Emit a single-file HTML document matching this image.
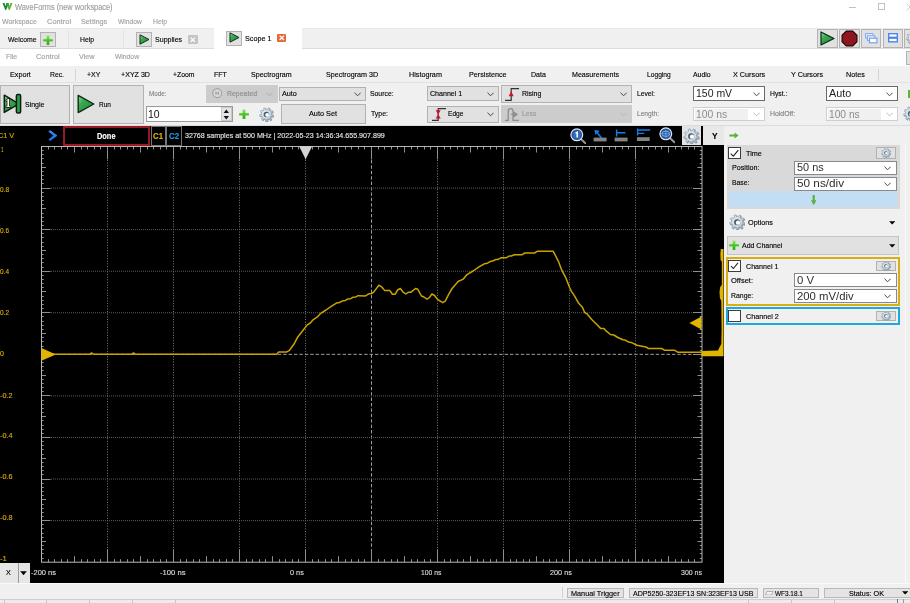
<!DOCTYPE html><html><head><meta charset="utf-8"><title>WaveForms</title><style>

html,body{margin:0;padding:0;}
body{width:910px;height:603px;position:relative;overflow:hidden;background:#f0f0f0;font-family:"Liberation Sans", sans-serif;}
#root{position:absolute;left:0;top:0;width:910px;height:603px;overflow:hidden;will-change:transform;}
.a{position:absolute;}
.t{position:absolute;white-space:pre;line-height:1;transform-origin:0 50%;-webkit-text-stroke:0.14px;}

</style></head><body><div id="root">
<div class="a" style="left:0.00px;top:0.00px;width:910.00px;height:27.50px;background:#fff;"></div>
<svg class="a" style="left:1.60px;top:2.90px" width="11" height="7.4" viewBox="0 0 11 7.4"><path d="M1.1 -1 L3.7 5.6 L6.3 -1" fill="none" stroke="#178a3c" stroke-width="1.9" stroke-linejoin="miter"/><path d="M4.7 -1 L7.3 5.6 L9.9 -1" fill="none" stroke="#5fb52e" stroke-width="1.9" stroke-linejoin="miter"/><path d="M4.7 -1 L6.2 2.9" fill="none" stroke="#2e9a3a" stroke-width="1.7"/></svg>
<span class="t" style="left:15.20px;top:4.20px;font-size:8.2px;color:#9c9c9c;transform:scaleX(0.9038);">WaveForms (new workspace)</span>
<div class="a" style="left:849.00px;top:6.50px;width:6.70px;height:0.70px;background:#c2c2c2;"></div>
<div class="a" style="left:878.30px;top:3.40px;width:6.30px;height:6.20px;border:0.8px solid #c2c2c2;box-sizing:border-box;"></div>
<svg class="a" style="left:906.40px;top:2.60px" width="8" height="9" viewBox="0 0 8 9"><path d="M0.5 0.5 L7.5 7.5 M0.5 7.5 L7.5 0.5" stroke="#c2c2c2" stroke-width="0.8" fill="none"/></svg>
<span class="t" style="left:1.70px;top:18.40px;font-size:8px;color:#a0a0a0;transform:scaleX(0.8727);">Workspace</span>
<span class="t" style="left:46.90px;top:18.40px;font-size:8px;color:#a0a0a0;transform:scaleX(0.9342);">Control</span>
<span class="t" style="left:80.80px;top:18.40px;font-size:8px;color:#a0a0a0;transform:scaleX(0.9064);">Settings</span>
<span class="t" style="left:118.00px;top:18.40px;font-size:8px;color:#a0a0a0;transform:scaleX(0.8365);">Window</span>
<span class="t" style="left:153.00px;top:18.40px;font-size:8px;color:#a0a0a0;transform:scaleX(0.8509);">Help</span>
<div class="a" style="left:0.00px;top:27.50px;width:910.00px;height:21.20px;background:#f0f0f0;"></div>
<div class="a" style="left:0.00px;top:48.20px;width:910.00px;height:0.70px;background:#dcdcdc;"></div>
<div class="a" style="left:0.00px;top:27.50px;width:910.00px;height:0.60px;background:#e9e9e9;"></div>
<span class="t" style="left:8.00px;top:36.00px;font-size:8px;color:#000;transform:scaleX(0.8584);">Welcome</span>
<div class="a" style="left:39.50px;top:32.30px;width:16.20px;height:14.40px;background:#e1e1e1;border:1px solid #b2b2b2;box-sizing:border-box;"></div>
<svg class="a" style="left:42.60px;top:34.50px" width="10" height="10" viewBox="0 0 10 10"><defs><linearGradient id="pg" x1="0" y1="0" x2="0" y2="1"><stop offset="0" stop-color="#96e474"/><stop offset="0.5" stop-color="#48c424"/><stop offset="1" stop-color="#2f9e14"/></linearGradient></defs><path d="M4 0.5 h2 a0.5 0.5 0 0 1 0.5 0.5 v3 h3 a0.5 0.5 0 0 1 0.5 0.5 v1.6 a0.5 0.5 0 0 1 -0.5 0.5 h-3 v3 a0.5 0.5 0 0 1 -0.5 0.5 h-2 a0.5 0.5 0 0 1 -0.5 -0.5 v-3 h-3 a0.5 0.5 0 0 1 -0.5 -0.5 v-1.6 a0.5 0.5 0 0 1 0.5 -0.5 h3 v-3 a0.5 0.5 0 0 1 0.5 -0.5 z" fill="url(#pg)" stroke="#c4eeb2" stroke-width="0.4"/></svg>
<div class="a" style="left:68.00px;top:30.00px;width:0.80px;height:17.00px;background:#e3e3e3;"></div>
<span class="t" style="left:79.90px;top:36.00px;font-size:8px;color:#000;transform:scaleX(0.8570);">Help</span>
<div class="a" style="left:123.00px;top:30.00px;width:0.80px;height:17.00px;background:#e3e3e3;"></div>
<div class="a" style="left:136.00px;top:32.00px;width:15.70px;height:14.70px;background:#e1e1e1;border:1px solid #b2b2b2;box-sizing:border-box;"></div>
<svg class="a" style="left:138.60px;top:33.80px" width="11" height="11" viewBox="0 0 13.5 14"><path d="M1 1 L1 13 L12.5 7 Z" fill="url(#tg)" stroke="#0b2a10" stroke-width="1.2" stroke-linejoin="round"/></svg>
<span class="t" style="left:154.90px;top:36.00px;font-size:8px;color:#000;transform:scaleX(0.8831);">Supplies</span>
<div class="a" style="left:188.40px;top:35.10px;width:9.20px;height:8.50px;background:#c4c4c4;border-radius:1px;"></div>
<svg class="a" style="left:190.20px;top:36.60px" width="5.6" height="5.6" viewBox="0 0 5.6 5.6"><path d="M0.6 0.6 L5 5 M0.6 5 L5 0.6" stroke="#fff" stroke-width="1.3"/></svg>
<div class="a" style="left:213.50px;top:27.50px;width:88.90px;height:22.00px;background:#fff;"></div>
<div class="a" style="left:226.30px;top:30.60px;width:15.70px;height:15.10px;background:#e1e1e1;border:1px solid #b2b2b2;box-sizing:border-box;"></div>
<svg class="a" style="left:229.00px;top:32.40px" width="11" height="11" viewBox="0 0 13.5 14"><path d="M1 1 L1 13 L12.5 7 Z" fill="url(#tg)" stroke="#0b2a10" stroke-width="1.2" stroke-linejoin="round"/></svg>
<span class="t" style="left:244.80px;top:35.00px;font-size:8px;color:#000;transform:scaleX(0.8992);">Scope 1</span>
<div class="a" style="left:277.30px;top:33.60px;width:9.10px;height:8.80px;background:#e8673a;border-radius:1px;"></div>
<svg class="a" style="left:279.10px;top:35.20px" width="5.6" height="5.6" viewBox="0 0 5.6 5.6"><path d="M0.6 0.6 L5 5 M0.6 5 L5 0.6" stroke="#fff" stroke-width="1.3"/></svg>
<div class="a" style="left:817.20px;top:29.00px;width:20.40px;height:18.60px;background:#e1e1e1;border:1px solid #b2b2b2;box-sizing:border-box;"></div>
<svg class="a" style="left:820.30px;top:30.80px" width="15" height="15" viewBox="0 0 15 15"><path d="M1 1 L1 14 L14 7.5 Z" fill="url(#tg)" stroke="#0b2a10" stroke-width="1.2" stroke-linejoin="round"/></svg>
<div class="a" style="left:839.20px;top:29.00px;width:20.40px;height:18.60px;background:#e1e1e1;border:1px solid #b2b2b2;box-sizing:border-box;"></div>
<svg class="a" style="left:840.90px;top:29.80px" width="17" height="17" viewBox="0 0 16 16"><path d="M5 1 L11 1 L15 5 L15 11 L11 15 L5 15 L1 11 L1 5 Z" fill="#8e1620" stroke="#2a0507" stroke-width="1.1"/></svg>
<div class="a" style="left:861.20px;top:29.00px;width:20.10px;height:18.60px;background:#e1e1e1;border:1px solid #b2b2b2;box-sizing:border-box;"></div>
<svg class="a" style="left:865.00px;top:32.50px" width="13" height="11" viewBox="0 0 13 11"><rect x="0.5" y="0.5" width="7.4" height="4.6" fill="#dfe9fb" stroke="#86adf0" stroke-width="1"/><rect x="2.5" y="2.8" width="7.4" height="4.6" fill="#eef3fd" stroke="#7ba5ee" stroke-width="1"/><rect x="4.5" y="5.2" width="7.4" height="4.6" fill="#fff" stroke="#6b9aec" stroke-width="1.1"/></svg>
<div class="a" style="left:882.70px;top:29.00px;width:20.00px;height:18.60px;background:#e1e1e1;border:1px solid #b2b2b2;box-sizing:border-box;"></div>
<svg class="a" style="left:887.50px;top:33.00px" width="11" height="11" viewBox="0 0 11 11"><rect x="0.7" y="0.7" width="8.6" height="3.6" fill="#fff" stroke="#4f86ea" stroke-width="1.4"/><rect x="0.7" y="5.2" width="8.6" height="3.6" fill="#fff" stroke="#4f86ea" stroke-width="1.4"/></svg>
<div class="a" style="left:904.20px;top:29.00px;width:10.80px;height:18.60px;background:#e1e1e1;border:1px solid #b2b2b2;box-sizing:border-box;"></div>
<svg class="a" style="left:905.60px;top:31.40px" width="14" height="14" viewBox="0 0 16 16"><defs><linearGradient id="gg" x1="0" y1="0" x2="1" y2="1"><stop offset="0" stop-color="#eef2f5"/><stop offset="0.5" stop-color="#c6d0d8"/><stop offset="1" stop-color="#94a6b4"/></linearGradient></defs><g transform="translate(8,8)"><path d="M5.30 0.01 L7.28 0.60 L6.94 2.28 L4.89 2.05 L4.05 3.42 L5.19 5.14 L3.85 6.20 L2.42 4.71 L0.91 5.22 L0.67 7.27 L-1.04 7.23 L-1.17 5.17 L-2.66 4.58 L-4.16 6.00 L-5.44 4.87 L-4.22 3.20 L-4.98 1.80 L-7.04 1.92 L-7.30 0.23 L-5.29 -0.26 L-4.98 -1.82 L-6.63 -3.05 L-5.74 -4.51 L-3.89 -3.60 L-2.64 -4.60 L-3.12 -6.60 L-1.50 -7.15 L-0.66 -5.26 L0.93 -5.22 L1.86 -7.06 L3.45 -6.43 L2.87 -4.46 L4.07 -3.40 L5.96 -4.21 L6.78 -2.71 L5.06 -1.57Z" transform="translate(0.6,0.6)" fill="#8498a8" stroke="#8498a8" stroke-width="0.8" stroke-linejoin="round"/><path d="M5.30 0.01 L7.28 0.60 L6.94 2.28 L4.89 2.05 L4.05 3.42 L5.19 5.14 L3.85 6.20 L2.42 4.71 L0.91 5.22 L0.67 7.27 L-1.04 7.23 L-1.17 5.17 L-2.66 4.58 L-4.16 6.00 L-5.44 4.87 L-4.22 3.20 L-4.98 1.80 L-7.04 1.92 L-7.30 0.23 L-5.29 -0.26 L-4.98 -1.82 L-6.63 -3.05 L-5.74 -4.51 L-3.89 -3.60 L-2.64 -4.60 L-3.12 -6.60 L-1.50 -7.15 L-0.66 -5.26 L0.93 -5.22 L1.86 -7.06 L3.45 -6.43 L2.87 -4.46 L4.07 -3.40 L5.96 -4.21 L6.78 -2.71 L5.06 -1.57Z" fill="url(#gg)" stroke="#8ea0ae" stroke-width="0.7" stroke-linejoin="round"/><circle r="4.1" fill="none" stroke="#f4f7f9" stroke-width="0.7" opacity="0.7"/><circle cx="-0.2" cy="-0.1" r="2.8" fill="#465c6d"/><circle cx="0.7" cy="0.4" r="2.1" fill="#fdfdfe"/></g></svg>
<div class="a" style="left:907.20px;top:52.50px;width:3.80px;height:10.00px;background:#8fb2ee;"></div>
<div class="a" style="left:0.00px;top:49.00px;width:910.00px;height:17.20px;background:#fff;"></div>
<span class="t" style="left:5.80px;top:53.40px;font-size:8px;color:#a0a0a0;transform:scaleX(0.8688);">File</span>
<span class="t" style="left:36.00px;top:53.40px;font-size:8px;color:#a0a0a0;transform:scaleX(0.9187);">Control</span>
<span class="t" style="left:79.30px;top:53.40px;font-size:8px;color:#a0a0a0;transform:scaleX(0.9068);">View</span>
<span class="t" style="left:115.00px;top:53.40px;font-size:8px;color:#a0a0a0;transform:scaleX(0.8435);">Window</span>
<div class="a" style="left:906.00px;top:50.50px;width:9.00px;height:14.10px;background:#e1e1e1;border:1px solid #b2b2b2;box-sizing:border-box;"></div>
<div class="a" style="left:0.00px;top:66.20px;width:910.00px;height:59.00px;background:#f0f0f0;"></div>
<div class="a" style="left:0.00px;top:82.30px;width:910.00px;height:0.70px;background:#e2e2e2;"></div>
<span class="t" style="left:9.60px;top:70.70px;font-size:8px;color:#000;transform:scaleX(0.8995);">Export</span>
<span class="t" style="left:49.80px;top:70.70px;font-size:8px;color:#000;transform:scaleX(0.8509);">Rec.</span>
<span class="t" style="left:87.00px;top:70.70px;font-size:8px;color:#000;transform:scaleX(0.8668);">+XY</span>
<span class="t" style="left:121.00px;top:70.70px;font-size:8px;color:#000;transform:scaleX(0.8872);">+XYZ 3D</span>
<span class="t" style="left:173.20px;top:70.70px;font-size:8px;color:#000;transform:scaleX(0.8557);">+Zoom</span>
<span class="t" style="left:214.10px;top:70.70px;font-size:8px;color:#000;transform:scaleX(0.8792);">FFT</span>
<span class="t" style="left:251.40px;top:70.70px;font-size:8px;color:#000;transform:scaleX(0.8865);">Spectrogram</span>
<span class="t" style="left:325.60px;top:70.70px;font-size:8px;color:#000;transform:scaleX(0.8961);">Spectrogram 3D</span>
<span class="t" style="left:409.00px;top:70.70px;font-size:8px;color:#000;transform:scaleX(0.9025);">Histogram</span>
<span class="t" style="left:469.30px;top:70.70px;font-size:8px;color:#000;transform:scaleX(0.8996);">Persistence</span>
<span class="t" style="left:531.10px;top:70.70px;font-size:8px;color:#000;transform:scaleX(0.8813);">Data</span>
<span class="t" style="left:571.90px;top:70.70px;font-size:8px;color:#000;transform:scaleX(0.8881);">Measurements</span>
<span class="t" style="left:647.00px;top:70.70px;font-size:8px;color:#000;transform:scaleX(0.8355);">Logging</span>
<span class="t" style="left:692.50px;top:70.70px;font-size:8px;color:#000;transform:scaleX(0.8647);">Audio</span>
<span class="t" style="left:732.80px;top:70.70px;font-size:8px;color:#000;transform:scaleX(0.9054);">X Cursors</span>
<span class="t" style="left:791.20px;top:70.70px;font-size:8px;color:#000;transform:scaleX(0.9034);">Y Cursors</span>
<span class="t" style="left:846.20px;top:70.70px;font-size:8px;color:#000;transform:scaleX(0.8993);">Notes</span>
<div class="a" style="left:75.30px;top:69.00px;width:0.70px;height:11.50px;background:#d4d4d4;"></div>
<div class="a" style="left:878.20px;top:69.00px;width:0.70px;height:11.50px;background:#d4d4d4;"></div>
<div class="a" style="left:0.30px;top:85.00px;width:69.90px;height:38.60px;background:#e1e1e1;border:1px solid #b2b2b2;box-sizing:border-box;"></div>
<svg class="a" style="left:3.00px;top:93.40px" width="19" height="21" viewBox="0 0 19 21"><defs><linearGradient id="tg" x1="0" y1="0" x2="1" y2="1"><stop offset="0" stop-color="#9ad6a2"/><stop offset="0.35" stop-color="#3aa650"/><stop offset="1" stop-color="#1f8a36"/></linearGradient></defs><path d="M1.3 2.2 L1.3 19.4 L16 10.8 Z" fill="url(#tg)" stroke="#0b1f0e" stroke-width="1.5" stroke-linejoin="round"/><rect x="13.4" y="1.6" width="4.2" height="18.4" rx="1.3" fill="#2f9e48" stroke="#0b1f0e" stroke-width="1.5"/><text x="2.3" y="14.4" font-family="Liberation Serif" font-weight="bold" font-size="11.5" fill="#111" stroke="#111" stroke-width="1.6" stroke-linejoin="round">1</text><text x="2.3" y="14.4" font-family="Liberation Serif" font-weight="bold" font-size="11.5" fill="#fff">1</text></svg>
<span class="t" style="left:24.90px;top:100.60px;font-size:8px;color:#000;transform:scaleX(0.8674);">Single</span>
<div class="a" style="left:73.40px;top:85.00px;width:70.30px;height:38.60px;background:#e1e1e1;border:1px solid #b2b2b2;box-sizing:border-box;"></div>
<svg class="a" style="left:76.60px;top:94.20px" width="18.5" height="20" viewBox="0 0 18.5 20"><path d="M1.2 1.4 L1.2 18.6 L16.8 10 Z" fill="url(#tg)" stroke="#0b2a10" stroke-width="1.4" stroke-linejoin="round"/></svg>
<span class="t" style="left:99.00px;top:100.60px;font-size:8px;color:#000;transform:scaleX(0.8102);">Run</span>
<span class="t" style="left:149.10px;top:89.60px;font-size:8px;color:#808080;transform:scaleX(0.7826);">Mode:</span>
<div class="a" style="left:206.30px;top:85.00px;width:71.30px;height:17.70px;background:#cccccc;"></div>
<svg class="a" style="left:211.60px;top:88.40px" width="10.4" height="10.4" viewBox="0 0 10.4 10.4"><circle cx="5.2" cy="5.2" r="4.5" fill="#d8d8d8" stroke="#8c8c8c" stroke-width="0.8"/><path d="M3.9 3.6 V6.8 M6.5 3.6 V6.8 M3.9 5.2 H6.5" stroke="#8c8c8c" stroke-width="0.7" fill="none"/></svg>
<span class="t" style="left:226.60px;top:89.60px;font-size:8px;color:#8c8c8c;transform:scaleX(0.8674);">Repeated</span>
<svg class="a" style="left:265.60px;top:91.60px" width="7.2" height="4.6" viewBox="0 0 7.2 4.6"><path d="M0.5 0.7 L3.6 3.8 L6.7 0.7" fill="none" stroke="#a8a8a8" stroke-width="0.9"/></svg>
<div class="a" style="left:146.30px;top:106.30px;width:86.70px;height:15.50px;background:#fff;border:1px solid #9a9a9a;box-sizing:border-box;"></div>
<span class="t" style="left:148.00px;top:108.70px;font-size:11px;color:#111;-webkit-text-stroke:0;transform:scaleX(0.9469);">10</span>
<div class="a" style="left:220.80px;top:107.20px;width:11.40px;height:13.80px;background:#e4e4e4;border:1px solid #c8c8c8;box-sizing:border-box;"></div>
<svg class="a" style="left:223.20px;top:108.60px" width="6.6" height="11" viewBox="0 0 6.6 11"><path d="M3.3 0.6 L6 4 L0.6 4 Z M3.3 10.4 L6 7 L0.6 7 Z" fill="#111"/></svg>
<svg class="a" style="left:239.30px;top:109.20px" width="10" height="10" viewBox="0 0 10 10"><defs><linearGradient id="pg" x1="0" y1="0" x2="0" y2="1"><stop offset="0" stop-color="#96e474"/><stop offset="0.5" stop-color="#48c424"/><stop offset="1" stop-color="#2f9e14"/></linearGradient></defs><path d="M4 0.5 h2 a0.5 0.5 0 0 1 0.5 0.5 v3 h3 a0.5 0.5 0 0 1 0.5 0.5 v1.6 a0.5 0.5 0 0 1 -0.5 0.5 h-3 v3 a0.5 0.5 0 0 1 -0.5 0.5 h-2 a0.5 0.5 0 0 1 -0.5 -0.5 v-3 h-3 a0.5 0.5 0 0 1 -0.5 -0.5 v-1.6 a0.5 0.5 0 0 1 0.5 -0.5 h3 v-3 a0.5 0.5 0 0 1 0.5 -0.5 z" fill="url(#pg)" stroke="#c4eeb2" stroke-width="0.4"/></svg>
<svg class="a" style="left:259.20px;top:106.60px" width="15" height="15" viewBox="0 0 16 16"><defs><linearGradient id="gg" x1="0" y1="0" x2="1" y2="1"><stop offset="0" stop-color="#eef2f5"/><stop offset="0.5" stop-color="#c6d0d8"/><stop offset="1" stop-color="#94a6b4"/></linearGradient></defs><g transform="translate(8,8)"><path d="M5.30 0.01 L7.28 0.60 L6.94 2.28 L4.89 2.05 L4.05 3.42 L5.19 5.14 L3.85 6.20 L2.42 4.71 L0.91 5.22 L0.67 7.27 L-1.04 7.23 L-1.17 5.17 L-2.66 4.58 L-4.16 6.00 L-5.44 4.87 L-4.22 3.20 L-4.98 1.80 L-7.04 1.92 L-7.30 0.23 L-5.29 -0.26 L-4.98 -1.82 L-6.63 -3.05 L-5.74 -4.51 L-3.89 -3.60 L-2.64 -4.60 L-3.12 -6.60 L-1.50 -7.15 L-0.66 -5.26 L0.93 -5.22 L1.86 -7.06 L3.45 -6.43 L2.87 -4.46 L4.07 -3.40 L5.96 -4.21 L6.78 -2.71 L5.06 -1.57Z" transform="translate(0.6,0.6)" fill="#8498a8" stroke="#8498a8" stroke-width="0.8" stroke-linejoin="round"/><path d="M5.30 0.01 L7.28 0.60 L6.94 2.28 L4.89 2.05 L4.05 3.42 L5.19 5.14 L3.85 6.20 L2.42 4.71 L0.91 5.22 L0.67 7.27 L-1.04 7.23 L-1.17 5.17 L-2.66 4.58 L-4.16 6.00 L-5.44 4.87 L-4.22 3.20 L-4.98 1.80 L-7.04 1.92 L-7.30 0.23 L-5.29 -0.26 L-4.98 -1.82 L-6.63 -3.05 L-5.74 -4.51 L-3.89 -3.60 L-2.64 -4.60 L-3.12 -6.60 L-1.50 -7.15 L-0.66 -5.26 L0.93 -5.22 L1.86 -7.06 L3.45 -6.43 L2.87 -4.46 L4.07 -3.40 L5.96 -4.21 L6.78 -2.71 L5.06 -1.57Z" fill="url(#gg)" stroke="#8ea0ae" stroke-width="0.7" stroke-linejoin="round"/><circle r="4.1" fill="none" stroke="#f4f7f9" stroke-width="0.7" opacity="0.7"/><circle cx="-0.2" cy="-0.1" r="2.8" fill="#465c6d"/><circle cx="0.7" cy="0.4" r="2.1" fill="#fdfdfe"/></g></svg>
<div class="a" style="left:279.00px;top:86.50px;width:87.00px;height:14.30px;background:#e1e1e1;border:1px solid #b2b2b2;box-sizing:border-box;"></div>
<span class="t" style="left:282.00px;top:89.60px;font-size:8px;color:#000;transform:scaleX(0.9047);">Auto</span>
<svg class="a" style="left:353.80px;top:91.60px" width="7.2" height="4.6" viewBox="0 0 7.2 4.6"><path d="M0.5 0.7 L3.6 3.8 L6.7 0.7" fill="none" stroke="#333" stroke-width="0.9"/></svg>
<div class="a" style="left:280.60px;top:104.30px;width:85.40px;height:19.40px;background:#e1e1e1;border:1px solid #b2b2b2;box-sizing:border-box;"></div>
<span class="t" style="left:308.50px;top:110.10px;font-size:8px;color:#000;transform:scaleX(0.9124);">Auto Set</span>
<span class="t" style="left:370.40px;top:89.60px;font-size:8px;color:#000;transform:scaleX(0.8558);">Source:</span>
<span class="t" style="left:370.90px;top:110.10px;font-size:8px;color:#000;transform:scaleX(0.8632);">Type:</span>
<div class="a" style="left:427.30px;top:86.30px;width:71.70px;height:14.50px;background:#e1e1e1;border:1px solid #b2b2b2;box-sizing:border-box;"></div>
<span class="t" style="left:430.00px;top:89.60px;font-size:8px;color:#000;transform:scaleX(0.8853);">Channel 1</span>
<svg class="a" style="left:486.80px;top:91.60px" width="7.2" height="4.6" viewBox="0 0 7.2 4.6"><path d="M0.5 0.7 L3.6 3.8 L6.7 0.7" fill="none" stroke="#333" stroke-width="0.9"/></svg>
<div class="a" style="left:427.30px;top:105.60px;width:71.70px;height:17.60px;background:#e1e1e1;border:1px solid #b2b2b2;box-sizing:border-box;"></div>
<svg class="a" style="left:431.20px;top:106.60px" width="16" height="15" viewBox="0 0 16 15"><path d="M1 13.3 H7.2 V1.6 H15" fill="none" stroke="#333" stroke-width="1.2"/><path d="M7.2 7.6 L4.7 3.2 H9.7 Z M7.2 7.2 L4.7 11.6 H9.7 Z" fill="#cc0f28"/></svg>
<span class="t" style="left:447.90px;top:110.10px;font-size:8px;color:#000;transform:scaleX(0.8294);">Edge</span>
<svg class="a" style="left:486.80px;top:112.10px" width="7.2" height="4.6" viewBox="0 0 7.2 4.6"><path d="M0.5 0.7 L3.6 3.8 L6.7 0.7" fill="none" stroke="#333" stroke-width="0.9"/></svg>
<div class="a" style="left:501.20px;top:84.50px;width:130.80px;height:18.20px;background:#e1e1e1;border:1px solid #b2b2b2;box-sizing:border-box;"></div>
<svg class="a" style="left:504.00px;top:86.60px" width="16" height="15" viewBox="0 0 16 15"><path d="M1 13.3 H7.2 V1.6 H15" fill="none" stroke="#333" stroke-width="1.2"/><path d="M7.2 4.2 L4.7 9.2 H9.7 Z" fill="#d8102a"/></svg>
<span class="t" style="left:521.70px;top:89.60px;font-size:8px;color:#000;transform:scaleX(0.8680);">Rising</span>
<svg class="a" style="left:619.70px;top:91.60px" width="7.2" height="4.6" viewBox="0 0 7.2 4.6"><path d="M0.5 0.7 L3.6 3.8 L6.7 0.7" fill="none" stroke="#333" stroke-width="0.9"/></svg>
<div class="a" style="left:501.20px;top:105.30px;width:130.80px;height:18.10px;background:#cccccc;"></div>
<svg class="a" style="left:504.00px;top:107.00px" width="16" height="15" viewBox="0 0 16 15"><path d="M1 13.3 H4.2 V4.2 Q4.2 1.6 6.6 1.6 Q9 1.6 9 4.2 V13.3 H15" fill="none" stroke="#8e8e8e" stroke-width="1.3"/><path d="M6.8 7.4 H11 M9.8 4.8 L13.4 7.4 L9.8 10Z" fill="#8e8e8e" stroke="#8e8e8e" stroke-width="1"/></svg>
<span class="t" style="left:521.70px;top:110.10px;font-size:8px;color:#9a9a9a;transform:scaleX(0.8518);">Less</span>
<svg class="a" style="left:619.70px;top:112.10px" width="7.2" height="4.6" viewBox="0 0 7.2 4.6"><path d="M0.5 0.7 L3.6 3.8 L6.7 0.7" fill="none" stroke="#b4b4b4" stroke-width="0.9"/></svg>
<span class="t" style="left:636.60px;top:89.70px;font-size:8px;color:#000;transform:scaleX(0.8380);">Level:</span>
<span class="t" style="left:636.60px;top:110.10px;font-size:8px;color:#808080;transform:scaleX(0.8276);">Length:</span>
<div class="a" style="left:693.40px;top:86.40px;width:71.60px;height:14.40px;background:#fff;border:1px solid #6a6a6a;box-sizing:border-box;"></div>
<span class="t" style="left:696.30px;top:88.30px;font-size:11px;color:#222;-webkit-text-stroke:0;transform:scaleX(0.9520);">150 mV</span>
<svg class="a" style="left:752.70px;top:91.60px" width="7.2" height="4.6" viewBox="0 0 7.2 4.6"><path d="M0.5 0.7 L3.6 3.8 L6.7 0.7" fill="none" stroke="#333" stroke-width="0.9"/></svg>
<div class="a" style="left:693.40px;top:107.00px;width:71.60px;height:14.40px;background:#fff;border:1px solid #cfcfcf;box-sizing:border-box;"></div>
<div class="a" style="left:695.30px;top:108.60px;width:52.50px;height:11.20px;background:#f0f0f0;"></div>
<span class="t" style="left:696.30px;top:108.90px;font-size:11px;color:#8c8c8c;-webkit-text-stroke:0;transform:scaleX(0.9446);">100 ns</span>
<svg class="a" style="left:752.70px;top:112.10px" width="7.2" height="4.6" viewBox="0 0 7.2 4.6"><path d="M0.5 0.7 L3.6 3.8 L6.7 0.7" fill="none" stroke="#b4b4b4" stroke-width="0.9"/></svg>
<span class="t" style="left:769.60px;top:89.70px;font-size:8px;color:#000;transform:scaleX(0.8507);">Hyst.:</span>
<span class="t" style="left:769.60px;top:110.10px;font-size:8px;color:#808080;transform:scaleX(0.8629);">HoldOff:</span>
<div class="a" style="left:826.10px;top:86.20px;width:71.80px;height:14.60px;background:#fff;border:1px solid #6a6a6a;box-sizing:border-box;"></div>
<span class="t" style="left:829.40px;top:88.30px;font-size:11px;color:#222;-webkit-text-stroke:0;transform:scaleX(0.9850);">Auto</span>
<svg class="a" style="left:885.60px;top:91.60px" width="7.2" height="4.6" viewBox="0 0 7.2 4.6"><path d="M0.5 0.7 L3.6 3.8 L6.7 0.7" fill="none" stroke="#333" stroke-width="0.9"/></svg>
<div class="a" style="left:826.10px;top:107.00px;width:71.80px;height:14.20px;background:#fff;border:1px solid #cfcfcf;box-sizing:border-box;"></div>
<div class="a" style="left:828.40px;top:108.60px;width:52.20px;height:11.20px;background:#f0f0f0;"></div>
<span class="t" style="left:829.40px;top:108.90px;font-size:11px;color:#8c8c8c;-webkit-text-stroke:0;transform:scaleX(0.9294);">100 ns</span>
<svg class="a" style="left:885.60px;top:112.10px" width="7.2" height="4.6" viewBox="0 0 7.2 4.6"><path d="M0.5 0.7 L3.6 3.8 L6.7 0.7" fill="none" stroke="#b4b4b4" stroke-width="0.9"/></svg>
<div class="a" style="left:908.40px;top:90.40px;width:2.60px;height:7.20px;background:#5cb82c;"></div>
<svg class="a" style="left:902.60px;top:106.30px" width="15.5" height="15.5" viewBox="0 0 16 16"><defs><linearGradient id="gg" x1="0" y1="0" x2="1" y2="1"><stop offset="0" stop-color="#eef2f5"/><stop offset="0.5" stop-color="#c6d0d8"/><stop offset="1" stop-color="#94a6b4"/></linearGradient></defs><g transform="translate(8,8)"><path d="M5.30 0.01 L7.28 0.60 L6.94 2.28 L4.89 2.05 L4.05 3.42 L5.19 5.14 L3.85 6.20 L2.42 4.71 L0.91 5.22 L0.67 7.27 L-1.04 7.23 L-1.17 5.17 L-2.66 4.58 L-4.16 6.00 L-5.44 4.87 L-4.22 3.20 L-4.98 1.80 L-7.04 1.92 L-7.30 0.23 L-5.29 -0.26 L-4.98 -1.82 L-6.63 -3.05 L-5.74 -4.51 L-3.89 -3.60 L-2.64 -4.60 L-3.12 -6.60 L-1.50 -7.15 L-0.66 -5.26 L0.93 -5.22 L1.86 -7.06 L3.45 -6.43 L2.87 -4.46 L4.07 -3.40 L5.96 -4.21 L6.78 -2.71 L5.06 -1.57Z" transform="translate(0.6,0.6)" fill="#8498a8" stroke="#8498a8" stroke-width="0.8" stroke-linejoin="round"/><path d="M5.30 0.01 L7.28 0.60 L6.94 2.28 L4.89 2.05 L4.05 3.42 L5.19 5.14 L3.85 6.20 L2.42 4.71 L0.91 5.22 L0.67 7.27 L-1.04 7.23 L-1.17 5.17 L-2.66 4.58 L-4.16 6.00 L-5.44 4.87 L-4.22 3.20 L-4.98 1.80 L-7.04 1.92 L-7.30 0.23 L-5.29 -0.26 L-4.98 -1.82 L-6.63 -3.05 L-5.74 -4.51 L-3.89 -3.60 L-2.64 -4.60 L-3.12 -6.60 L-1.50 -7.15 L-0.66 -5.26 L0.93 -5.22 L1.86 -7.06 L3.45 -6.43 L2.87 -4.46 L4.07 -3.40 L5.96 -4.21 L6.78 -2.71 L5.06 -1.57Z" fill="url(#gg)" stroke="#8ea0ae" stroke-width="0.7" stroke-linejoin="round"/><circle r="4.1" fill="none" stroke="#f4f7f9" stroke-width="0.7" opacity="0.7"/><circle cx="-0.2" cy="-0.1" r="2.8" fill="#465c6d"/><circle cx="0.7" cy="0.4" r="2.1" fill="#fdfdfe"/></g></svg>
<div class="a" style="left:0.00px;top:124.80px;width:910.00px;height:0.60px;background:#dcdcdc;"></div>
<div class="a" style="left:0.00px;top:125.50px;width:724.20px;height:457.30px;background:#000;"></div>
<svg class="a" style="left:0;top:0" width="910" height="603" viewBox="0 0 910 603"><path d="M107.50 160 V549.20" stroke="#787878" stroke-width="1" stroke-dasharray="1 1.65" fill="none"/><path d="M173.50 160 V549.20" stroke="#787878" stroke-width="1" stroke-dasharray="1 1.65" fill="none"/><path d="M239.50 160 V549.20" stroke="#787878" stroke-width="1" stroke-dasharray="1 1.65" fill="none"/><path d="M305.50 160 V549.20" stroke="#787878" stroke-width="1" stroke-dasharray="1 1.65" fill="none"/><path d="M371.50 160 V549.20" stroke="#9c9c9c" stroke-width="1" stroke-dasharray="3.4 2" fill="none"/><path d="M437.50 160 V549.20" stroke="#787878" stroke-width="1" stroke-dasharray="1 1.65" fill="none"/><path d="M503.50 160 V549.20" stroke="#787878" stroke-width="1" stroke-dasharray="1 1.65" fill="none"/><path d="M569.50 160 V549.20" stroke="#787878" stroke-width="1" stroke-dasharray="1 1.65" fill="none"/><path d="M635.50 160 V549.20" stroke="#787878" stroke-width="1" stroke-dasharray="1 1.65" fill="none"/><path d="M51 188.07 H692.50" stroke="#5c5c5c" stroke-width="1" stroke-dasharray="1 1" fill="none"/><path d="M51 229.64 H692.50" stroke="#5c5c5c" stroke-width="1" stroke-dasharray="1 1" fill="none"/><path d="M51 271.21 H692.50" stroke="#5c5c5c" stroke-width="1" stroke-dasharray="1 1" fill="none"/><path d="M51 312.78 H692.50" stroke="#5c5c5c" stroke-width="1" stroke-dasharray="1 1" fill="none"/><path d="M51 354.35 H692.50" stroke="#9c9c9c" stroke-width="1" stroke-dasharray="3.4 2" fill="none"/><path d="M51 395.92 H692.50" stroke="#5c5c5c" stroke-width="1" stroke-dasharray="1 1" fill="none"/><path d="M51 437.49 H692.50" stroke="#5c5c5c" stroke-width="1" stroke-dasharray="1 1" fill="none"/><path d="M51 479.06 H692.50" stroke="#5c5c5c" stroke-width="1" stroke-dasharray="1 1" fill="none"/><path d="M51 520.63 H692.50" stroke="#5c5c5c" stroke-width="1" stroke-dasharray="1 1" fill="none"/><path d="M48.50 146.50 v3 M48.50 562.20 v-3 M41.50 150.50 h2.2 M702.00 150.50 h-2.2 M54.50 146.50 v3 M54.50 562.20 v-3 M41.50 154.50 h2.2 M702.00 154.50 h-2.2 M61.50 146.50 v3 M61.50 562.20 v-3 M41.50 158.50 h2.2 M702.00 158.50 h-2.2 M67.50 146.50 v3 M67.50 562.20 v-3 M41.50 163.50 h2.2 M702.00 163.50 h-2.2 M74.50 146.50 v6 M74.50 562.20 v-6 M41.50 167.50 h4.5 M702.00 167.50 h-4.5 M81.50 146.50 v3 M81.50 562.20 v-3 M41.50 171.50 h2.2 M702.00 171.50 h-2.2 M87.50 146.50 v3 M87.50 562.20 v-3 M41.50 175.50 h2.2 M702.00 175.50 h-2.2 M94.50 146.50 v3 M94.50 562.20 v-3 M41.50 179.50 h2.2 M702.00 179.50 h-2.2 M100.50 146.50 v3 M100.50 562.20 v-3 M41.50 183.50 h2.2 M702.00 183.50 h-2.2 M107.50 146.50 v13 M107.50 562.20 v-13 M41.50 188.50 h9 M702.00 188.50 h-9 M114.50 146.50 v3 M114.50 562.20 v-3 M41.50 192.50 h2.2 M702.00 192.50 h-2.2 M120.50 146.50 v3 M120.50 562.20 v-3 M41.50 196.50 h2.2 M702.00 196.50 h-2.2 M127.50 146.50 v3 M127.50 562.20 v-3 M41.50 200.50 h2.2 M702.00 200.50 h-2.2 M133.50 146.50 v3 M133.50 562.20 v-3 M41.50 204.50 h2.2 M702.00 204.50 h-2.2 M140.50 146.50 v6 M140.50 562.20 v-6 M41.50 208.50 h4.5 M702.00 208.50 h-4.5 M147.50 146.50 v3 M147.50 562.20 v-3 M41.50 213.50 h2.2 M702.00 213.50 h-2.2 M153.50 146.50 v3 M153.50 562.20 v-3 M41.50 217.50 h2.2 M702.00 217.50 h-2.2 M160.50 146.50 v3 M160.50 562.20 v-3 M41.50 221.50 h2.2 M702.00 221.50 h-2.2 M166.50 146.50 v3 M166.50 562.20 v-3 M41.50 225.50 h2.2 M702.00 225.50 h-2.2 M173.50 146.50 v13 M173.50 562.20 v-13 M41.50 229.50 h9 M702.00 229.50 h-9 M180.50 146.50 v3 M180.50 562.20 v-3 M41.50 233.50 h2.2 M702.00 233.50 h-2.2 M186.50 146.50 v3 M186.50 562.20 v-3 M41.50 237.50 h2.2 M702.00 237.50 h-2.2 M193.50 146.50 v3 M193.50 562.20 v-3 M41.50 242.50 h2.2 M702.00 242.50 h-2.2 M199.50 146.50 v3 M199.50 562.20 v-3 M41.50 246.50 h2.2 M702.00 246.50 h-2.2 M206.50 146.50 v6 M206.50 562.20 v-6 M41.50 250.50 h4.5 M702.00 250.50 h-4.5 M213.50 146.50 v3 M213.50 562.20 v-3 M41.50 254.50 h2.2 M702.00 254.50 h-2.2 M219.50 146.50 v3 M219.50 562.20 v-3 M41.50 258.50 h2.2 M702.00 258.50 h-2.2 M226.50 146.50 v3 M226.50 562.20 v-3 M41.50 262.50 h2.2 M702.00 262.50 h-2.2 M232.50 146.50 v3 M232.50 562.20 v-3 M41.50 267.50 h2.2 M702.00 267.50 h-2.2 M239.50 146.50 v13 M239.50 562.20 v-13 M41.50 271.50 h9 M702.00 271.50 h-9 M246.50 146.50 v3 M246.50 562.20 v-3 M41.50 275.50 h2.2 M702.00 275.50 h-2.2 M252.50 146.50 v3 M252.50 562.20 v-3 M41.50 279.50 h2.2 M702.00 279.50 h-2.2 M259.50 146.50 v3 M259.50 562.20 v-3 M41.50 283.50 h2.2 M702.00 283.50 h-2.2 M265.50 146.50 v3 M265.50 562.20 v-3 M41.50 287.50 h2.2 M702.00 287.50 h-2.2 M272.50 146.50 v6 M272.50 562.20 v-6 M41.50 291.50 h4.5 M702.00 291.50 h-4.5 M279.50 146.50 v3 M279.50 562.20 v-3 M41.50 296.50 h2.2 M702.00 296.50 h-2.2 M285.50 146.50 v3 M285.50 562.20 v-3 M41.50 300.50 h2.2 M702.00 300.50 h-2.2 M292.50 146.50 v3 M292.50 562.20 v-3 M41.50 304.50 h2.2 M702.00 304.50 h-2.2 M298.50 146.50 v3 M298.50 562.20 v-3 M41.50 308.50 h2.2 M702.00 308.50 h-2.2 M305.50 146.50 v13 M305.50 562.20 v-13 M41.50 312.50 h9 M702.00 312.50 h-9 M312.50 146.50 v3 M312.50 562.20 v-3 M41.50 316.50 h2.2 M702.00 316.50 h-2.2 M318.50 146.50 v3 M318.50 562.20 v-3 M41.50 321.50 h2.2 M702.00 321.50 h-2.2 M325.50 146.50 v3 M325.50 562.20 v-3 M41.50 325.50 h2.2 M702.00 325.50 h-2.2 M331.50 146.50 v3 M331.50 562.20 v-3 M41.50 329.50 h2.2 M702.00 329.50 h-2.2 M338.50 146.50 v6 M338.50 562.20 v-6 M41.50 333.50 h4.5 M702.00 333.50 h-4.5 M345.50 146.50 v3 M345.50 562.20 v-3 M41.50 337.50 h2.2 M702.00 337.50 h-2.2 M351.50 146.50 v3 M351.50 562.20 v-3 M41.50 341.50 h2.2 M702.00 341.50 h-2.2 M358.50 146.50 v3 M358.50 562.20 v-3 M41.50 346.50 h2.2 M702.00 346.50 h-2.2 M364.50 146.50 v3 M364.50 562.20 v-3 M41.50 350.50 h2.2 M702.00 350.50 h-2.2 M371.50 146.50 v13 M371.50 562.20 v-13 M41.50 354.50 h9 M702.00 354.50 h-9 M378.50 146.50 v3 M378.50 562.20 v-3 M41.50 358.50 h2.2 M702.00 358.50 h-2.2 M384.50 146.50 v3 M384.50 562.20 v-3 M41.50 362.50 h2.2 M702.00 362.50 h-2.2 M391.50 146.50 v3 M391.50 562.20 v-3 M41.50 366.50 h2.2 M702.00 366.50 h-2.2 M397.50 146.50 v3 M397.50 562.20 v-3 M41.50 370.50 h2.2 M702.00 370.50 h-2.2 M404.50 146.50 v6 M404.50 562.20 v-6 M41.50 375.50 h4.5 M702.00 375.50 h-4.5 M411.50 146.50 v3 M411.50 562.20 v-3 M41.50 379.50 h2.2 M702.00 379.50 h-2.2 M417.50 146.50 v3 M417.50 562.20 v-3 M41.50 383.50 h2.2 M702.00 383.50 h-2.2 M424.50 146.50 v3 M424.50 562.20 v-3 M41.50 387.50 h2.2 M702.00 387.50 h-2.2 M430.50 146.50 v3 M430.50 562.20 v-3 M41.50 391.50 h2.2 M702.00 391.50 h-2.2 M437.50 146.50 v13 M437.50 562.20 v-13 M41.50 395.50 h9 M702.00 395.50 h-9 M444.50 146.50 v3 M444.50 562.20 v-3 M41.50 400.50 h2.2 M702.00 400.50 h-2.2 M450.50 146.50 v3 M450.50 562.20 v-3 M41.50 404.50 h2.2 M702.00 404.50 h-2.2 M457.50 146.50 v3 M457.50 562.20 v-3 M41.50 408.50 h2.2 M702.00 408.50 h-2.2 M463.50 146.50 v3 M463.50 562.20 v-3 M41.50 412.50 h2.2 M702.00 412.50 h-2.2 M470.50 146.50 v6 M470.50 562.20 v-6 M41.50 416.50 h4.5 M702.00 416.50 h-4.5 M477.50 146.50 v3 M477.50 562.20 v-3 M41.50 420.50 h2.2 M702.00 420.50 h-2.2 M483.50 146.50 v3 M483.50 562.20 v-3 M41.50 425.50 h2.2 M702.00 425.50 h-2.2 M490.50 146.50 v3 M490.50 562.20 v-3 M41.50 429.50 h2.2 M702.00 429.50 h-2.2 M496.50 146.50 v3 M496.50 562.20 v-3 M41.50 433.50 h2.2 M702.00 433.50 h-2.2 M503.50 146.50 v13 M503.50 562.20 v-13 M41.50 437.50 h9 M702.00 437.50 h-9 M510.50 146.50 v3 M510.50 562.20 v-3 M41.50 441.50 h2.2 M702.00 441.50 h-2.2 M516.50 146.50 v3 M516.50 562.20 v-3 M41.50 445.50 h2.2 M702.00 445.50 h-2.2 M523.50 146.50 v3 M523.50 562.20 v-3 M41.50 449.50 h2.2 M702.00 449.50 h-2.2 M529.50 146.50 v3 M529.50 562.20 v-3 M41.50 454.50 h2.2 M702.00 454.50 h-2.2 M536.50 146.50 v6 M536.50 562.20 v-6 M41.50 458.50 h4.5 M702.00 458.50 h-4.5 M543.50 146.50 v3 M543.50 562.20 v-3 M41.50 462.50 h2.2 M702.00 462.50 h-2.2 M549.50 146.50 v3 M549.50 562.20 v-3 M41.50 466.50 h2.2 M702.00 466.50 h-2.2 M556.50 146.50 v3 M556.50 562.20 v-3 M41.50 470.50 h2.2 M702.00 470.50 h-2.2 M562.50 146.50 v3 M562.50 562.20 v-3 M41.50 474.50 h2.2 M702.00 474.50 h-2.2 M569.50 146.50 v13 M569.50 562.20 v-13 M41.50 479.50 h9 M702.00 479.50 h-9 M576.50 146.50 v3 M576.50 562.20 v-3 M41.50 483.50 h2.2 M702.00 483.50 h-2.2 M582.50 146.50 v3 M582.50 562.20 v-3 M41.50 487.50 h2.2 M702.00 487.50 h-2.2 M589.50 146.50 v3 M589.50 562.20 v-3 M41.50 491.50 h2.2 M702.00 491.50 h-2.2 M595.50 146.50 v3 M595.50 562.20 v-3 M41.50 495.50 h2.2 M702.00 495.50 h-2.2 M602.50 146.50 v6 M602.50 562.20 v-6 M41.50 499.50 h4.5 M702.00 499.50 h-4.5 M609.50 146.50 v3 M609.50 562.20 v-3 M41.50 504.50 h2.2 M702.00 504.50 h-2.2 M615.50 146.50 v3 M615.50 562.20 v-3 M41.50 508.50 h2.2 M702.00 508.50 h-2.2 M622.50 146.50 v3 M622.50 562.20 v-3 M41.50 512.50 h2.2 M702.00 512.50 h-2.2 M628.50 146.50 v3 M628.50 562.20 v-3 M41.50 516.50 h2.2 M702.00 516.50 h-2.2 M635.50 146.50 v13 M635.50 562.20 v-13 M41.50 520.50 h9 M702.00 520.50 h-9 M642.50 146.50 v3 M642.50 562.20 v-3 M41.50 524.50 h2.2 M702.00 524.50 h-2.2 M648.50 146.50 v3 M648.50 562.20 v-3 M41.50 528.50 h2.2 M702.00 528.50 h-2.2 M655.50 146.50 v3 M655.50 562.20 v-3 M41.50 533.50 h2.2 M702.00 533.50 h-2.2 M661.50 146.50 v3 M661.50 562.20 v-3 M41.50 537.50 h2.2 M702.00 537.50 h-2.2 M668.50 146.50 v6 M668.50 562.20 v-6 M41.50 541.50 h4.5 M702.00 541.50 h-4.5 M675.50 146.50 v3 M675.50 562.20 v-3 M41.50 545.50 h2.2 M702.00 545.50 h-2.2 M681.50 146.50 v3 M681.50 562.20 v-3 M41.50 549.50 h2.2 M702.00 549.50 h-2.2 M688.50 146.50 v3 M688.50 562.20 v-3 M41.50 553.50 h2.2 M702.00 553.50 h-2.2 M694.50 146.50 v3 M694.50 562.20 v-3 M41.50 558.50 h2.2 M702.00 558.50 h-2.2" stroke="#b4b4b4" stroke-width="0.8" fill="none"/><rect x="41.5" y="146.5" width="660.5" height="415.70000000000005" fill="none" stroke="#b6b6b6" stroke-width="1"/><path d="M723.5 249.0 L720.8 249.0 L720.4 254.0 L720.6 260.0 L721.8 261.5 L721.8 285.0 L720.2 287.0 L719.5 292.0 L719.9 298.0 L721.3 301.0 L721.6 330.0 L721.3 344.0 L719.6 347.0 L718.0 350.6 L701.5 351.0 L701.5 356.3 L723.5 356.3Z" fill="#e0b400"/><path d="M42.0 354.3 L89.5 354.3 L91.6 352.9 L93.7 354.3 L131.5 354.3 L133.5 352.9 L135.6 354.3 L276.7 354.3 L278.7 352.1 L286.4 352.1 L289.4 350.3 L293.9 344.3 L297.6 337.2 L302.1 331.5 L307.3 324.9 L310.3 323.0 L313.3 319.6 L317.8 316.6 L320.7 313.3 L326.0 310.0 L331.2 306.3 L336.4 303.1 L339.4 302.5 L343.1 300.7 L345.4 300.4 L347.6 299.1 L350.6 298.7 L352.8 297.3 L355.8 296.9 L358.1 295.7 L365.5 296.0 L368.5 293.9 L371.5 293.6 L373.7 292.1 L378.9 285.2 L382.0 287.2 L384.6 290.4 L389.7 290.4 L392.4 294.3 L395.1 294.3 L397.6 290.0 L400.3 288.5 L402.8 291.8 L405.8 294.0 L408.5 292.2 L411.0 292.2 L415.5 288.5 L417.8 289.3 L421.5 296.0 L424.0 297.0 L427.0 299.1 L429.4 297.5 L431.9 294.0 L434.5 295.5 L437.5 299.4 L442.8 302.7 L445.4 300.9 L448.4 294.9 L452.1 288.5 L458.1 281.5 L463.3 279.1 L467.0 274.6 L473.0 271.0 L479.0 266.9 L484.3 263.8 L487.5 263.2 L490.4 261.4 L492.7 261.0 L495.7 259.6 L497.9 259.4 L500.9 257.8 L506.1 257.8 L509.1 256.1 L511.3 256.0 L514.3 254.8 L521.8 254.8 L524.8 253.0 L534.5 253.0 L537.5 251.2 L553.1 251.2 L554.6 253.9 L558.4 261.3 L561.3 269.1 L565.8 277.8 L569.6 287.5 L571.3 291.2 L574.8 296.4 L578.5 303.1 L582.2 306.9 L584.7 312.5 L587.4 314.2 L591.5 319.3 L596.5 324.3 L600.6 328.4 L603.9 328.4 L606.4 331.2 L610.5 334.5 L613.8 335.0 L617.9 337.5 L622.9 339.8 L625.3 340.1 L628.6 342.1 L631.1 342.4 L636.9 345.2 L645.9 346.9 L648.4 348.5 L661.6 348.5 L664.9 350.3 L674.8 350.3 L678.1 352.3 L702.0 352.3" fill="none" stroke="#c9a300" stroke-width="1.5" stroke-linejoin="round"/><path d="M41.5 348 L41.5 360.8 L55.8 354.4 Z" fill="#e0b400"/><path d="M701.5 316.4 L701.5 329.4 L689.4 322.9 Z" fill="#e0b400"/><path d="M299.1 146.2 L312.1 146.2 L305.6 159.2 Z" fill="#d4d4d4"/></svg>
<span class="t" style="left:-1.60px;top:132.20px;font-size:8px;color:#dcb200;transform:scaleX(0.9103);">C1 V</span>
<svg class="a" style="left:47.60px;top:130.40px" width="9.6" height="11.6" viewBox="0 0 9.6 11.6"><defs><linearGradient id="cg" x1="0" y1="0" x2="0" y2="1"><stop offset="0" stop-color="#3a96ff"/><stop offset="1" stop-color="#1466e8"/></linearGradient></defs><path d="M0.3 1.6 L2.2 0.2 L9.4 5.6 L2.2 11 L0.3 9.6 L5.4 5.6 Z" fill="url(#cg)"/></svg>
<div class="a" style="left:63.30px;top:126.00px;width:86.90px;height:19.50px;border:2px solid #9c1828;box-sizing:border-box;"></div>
<span class="t" style="left:97.40px;top:131.70px;font-size:8.6px;color:#fff;font-weight:bold;transform:scaleX(0.8611);">Done</span>
<div class="a" style="left:150.50px;top:126.00px;width:15.90px;height:20.20px;border:1px solid #757575;box-sizing:border-box;"></div>
<span class="t" style="left:152.60px;top:131.70px;font-size:8.6px;color:#e0b400;font-weight:bold;transform:scaleX(0.9091);">C1</span>
<div class="a" style="left:166.40px;top:126.00px;width:15.90px;height:20.20px;border:1px solid #757575;box-sizing:border-box;"></div>
<span class="t" style="left:168.60px;top:131.70px;font-size:8.6px;color:#1c9fdc;font-weight:bold;transform:scaleX(0.9273);">C2</span>
<span class="t" style="left:184.80px;top:132.20px;font-size:8px;color:#e6e6e6;transform:scaleX(0.8884);">32768 samples at 500 MHz | 2022-05-23 14:36:34.655.907.899</span>
<span class="t" style="left:0.90px;top:146.30px;font-size:8px;color:#dcb200;transform:scaleX(0.5389);">1</span>
<span class="t" style="left:0.10px;top:186.00px;font-size:8px;color:#dcb200;transform:scaleX(0.8090);">0.8</span>
<span class="t" style="left:0.10px;top:227.40px;font-size:8px;color:#dcb200;transform:scaleX(0.8090);">0.6</span>
<span class="t" style="left:0.10px;top:268.40px;font-size:8px;color:#dcb200;transform:scaleX(0.8090);">0.4</span>
<span class="t" style="left:0.10px;top:309.00px;font-size:8px;color:#dcb200;transform:scaleX(0.8090);">0.2</span>
<span class="t" style="left:0.10px;top:350.40px;font-size:8px;color:#dcb200;transform:scaleX(0.8758);">0</span>
<span class="t" style="left:0.10px;top:391.70px;font-size:8px;color:#dcb200;transform:scaleX(0.8988);">-0.2</span>
<span class="t" style="left:0.10px;top:432.00px;font-size:8px;color:#dcb200;transform:scaleX(0.8988);">-0.4</span>
<span class="t" style="left:0.10px;top:473.20px;font-size:8px;color:#dcb200;transform:scaleX(0.8988);">-0.6</span>
<span class="t" style="left:0.10px;top:514.20px;font-size:8px;color:#dcb200;transform:scaleX(0.8988);">-0.8</span>
<span class="t" style="left:0.10px;top:555.00px;font-size:8px;color:#dcb200;transform:scaleX(0.9544);">-1</span>
<span class="t" style="left:31.00px;top:568.80px;font-size:8px;color:#dcdcdc;transform:scaleX(0.9368);">-200 ns</span>
<span class="t" style="left:160.20px;top:568.80px;font-size:8px;color:#dcdcdc;transform:scaleX(0.9593);">-100 ns</span>
<span class="t" style="left:290.20px;top:568.80px;font-size:8px;color:#dcdcdc;transform:scaleX(0.9124);">0 ns</span>
<span class="t" style="left:421.30px;top:568.80px;font-size:8px;color:#dcdcdc;transform:scaleX(0.8447);">100 ns</span>
<span class="t" style="left:550.00px;top:568.80px;font-size:8px;color:#dcdcdc;transform:scaleX(0.9072);">200 ns</span>
<span class="t" style="left:681.00px;top:568.80px;font-size:8px;color:#dcdcdc;transform:scaleX(0.8739);">300 ns</span>
<div class="a" style="left:0.00px;top:563.00px;width:17.90px;height:19.80px;background:#e6e6e6;"></div>
<span class="t" style="left:5.80px;top:569.00px;font-size:8px;color:#000;transform:scaleX(0.8982);">X</span>
<div class="a" style="left:17.90px;top:563.00px;width:0.70px;height:19.80px;background:#9a9a9a;"></div>
<div class="a" style="left:18.60px;top:563.00px;width:11.50px;height:19.80px;background:#e6e6e6;"></div>
<svg class="a" style="left:20.40px;top:571.00px" width="7" height="4.4" viewBox="0 0 7 4.4"><path d="M0.2 0.3 H6.8 L3.5 4.2 Z" fill="#000"/></svg>
<svg class="a" style="left:569.70px;top:127.60px" width="16.5" height="16.5" viewBox="0 0 16.5 16.5"><path d="M11.2 11.2 L15.4 15.2" stroke="#9a9a9a" stroke-width="1.9" stroke-linecap="round"/><circle cx="6.8" cy="6.8" r="5.9" fill="#2156a6" stroke="#dfe5ec" stroke-width="1.2"/><circle cx="6.8" cy="6.8" r="3.9" fill="#3f73c0" opacity="0.7"/><path d="M5.6 5.4 L7.2 4.4 V9.4" stroke="#fff" stroke-width="1.5" fill="none"/></svg>
<svg class="a" style="left:592.60px;top:128.60px" width="14.5" height="13" viewBox="0 0 14.5 13"><path d="M1.4 0.8 L6.8 2 L5 3.4 L9 8.2 L7.8 9.2 L3.8 4.4 L2.4 6 Z" fill="#0f82ee"/><rect x="0.6" y="8.6" width="13" height="3.8" fill="#858585"/></svg>
<svg class="a" style="left:614.40px;top:128.60px" width="14.5" height="13" viewBox="0 0 14.5 13"><path d="M2.6 0.4 V7.6 M2.6 3.8 H11.4" stroke="#0f82ee" stroke-width="1.4" fill="none"/><rect x="0.6" y="8.6" width="13" height="3.8" fill="#858585"/></svg>
<svg class="a" style="left:636.20px;top:128.00px" width="15" height="13.6" viewBox="0 0 15 13.6"><path d="M1.6 0.4 V7.6 M1.6 2 H14.2 M1.6 5.3 H8.2" stroke="#0f82ee" stroke-width="1.3" fill="none"/><rect x="0.9" y="9.2" width="12.8" height="3.8" fill="#858585"/></svg>
<svg class="a" style="left:658.60px;top:127.30px" width="16.5" height="16.5" viewBox="0 0 16.5 16.5"><path d="M11.2 11.2 L15.4 15.2" stroke="#9a9a9a" stroke-width="1.9" stroke-linecap="round"/><circle cx="6.8" cy="6.8" r="5.9" fill="#2156a6" stroke="#dfe5ec" stroke-width="1.2"/><path d="M3 6.8 H10.6 M6.8 3 V10.6" stroke="#86a9dc" stroke-width="0.8"/><ellipse cx="6.8" cy="6.8" rx="4" ry="2.6" fill="none" stroke="#9dbbe6" stroke-width="0.8"/></svg>
<div class="a" style="left:681.50px;top:126.30px;width:19.90px;height:18.70px;background:#e4e4e4;"></div>
<svg class="a" style="left:683.20px;top:127.60px" width="16.5" height="16.5" viewBox="0 0 16 16"><defs><linearGradient id="gg" x1="0" y1="0" x2="1" y2="1"><stop offset="0" stop-color="#eef2f5"/><stop offset="0.5" stop-color="#c6d0d8"/><stop offset="1" stop-color="#94a6b4"/></linearGradient></defs><g transform="translate(8,8)"><path d="M5.30 0.01 L7.28 0.60 L6.94 2.28 L4.89 2.05 L4.05 3.42 L5.19 5.14 L3.85 6.20 L2.42 4.71 L0.91 5.22 L0.67 7.27 L-1.04 7.23 L-1.17 5.17 L-2.66 4.58 L-4.16 6.00 L-5.44 4.87 L-4.22 3.20 L-4.98 1.80 L-7.04 1.92 L-7.30 0.23 L-5.29 -0.26 L-4.98 -1.82 L-6.63 -3.05 L-5.74 -4.51 L-3.89 -3.60 L-2.64 -4.60 L-3.12 -6.60 L-1.50 -7.15 L-0.66 -5.26 L0.93 -5.22 L1.86 -7.06 L3.45 -6.43 L2.87 -4.46 L4.07 -3.40 L5.96 -4.21 L6.78 -2.71 L5.06 -1.57Z" transform="translate(0.6,0.6)" fill="#8498a8" stroke="#8498a8" stroke-width="0.8" stroke-linejoin="round"/><path d="M5.30 0.01 L7.28 0.60 L6.94 2.28 L4.89 2.05 L4.05 3.42 L5.19 5.14 L3.85 6.20 L2.42 4.71 L0.91 5.22 L0.67 7.27 L-1.04 7.23 L-1.17 5.17 L-2.66 4.58 L-4.16 6.00 L-5.44 4.87 L-4.22 3.20 L-4.98 1.80 L-7.04 1.92 L-7.30 0.23 L-5.29 -0.26 L-4.98 -1.82 L-6.63 -3.05 L-5.74 -4.51 L-3.89 -3.60 L-2.64 -4.60 L-3.12 -6.60 L-1.50 -7.15 L-0.66 -5.26 L0.93 -5.22 L1.86 -7.06 L3.45 -6.43 L2.87 -4.46 L4.07 -3.40 L5.96 -4.21 L6.78 -2.71 L5.06 -1.57Z" fill="url(#gg)" stroke="#8ea0ae" stroke-width="0.7" stroke-linejoin="round"/><circle r="4.1" fill="none" stroke="#f4f7f9" stroke-width="0.7" opacity="0.7"/><circle cx="-0.2" cy="-0.1" r="2.8" fill="#465c6d"/><circle cx="0.7" cy="0.4" r="2.1" fill="#fdfdfe"/></g></svg>
<div class="a" style="left:703.00px;top:126.30px;width:21.20px;height:18.70px;background:#e8e8e8;"></div>
<span class="t" style="left:712.40px;top:131.55px;font-size:8.5px;color:#000;font-weight:bold;transform:scaleX(0.9873);">Y</span>
<svg class="a" style="left:728.60px;top:131.60px" width="10" height="7" viewBox="0 0 10 7"><path d="M0.4 2.4 H5.6 V0.4 L9.6 3.5 L5.6 6.6 V4.6 H0.4 Z" fill="#58b52f"/></svg>
<div class="a" style="left:726.70px;top:144.60px;width:172.90px;height:64.70px;background:#d9d9d9;"></div>
<div class="a" style="left:728.40px;top:146.70px;width:12.80px;height:12.60px;background:#fff;border:1px solid #3c3c3c;box-sizing:border-box;"></div>
<svg class="a" style="left:728.40px;top:146.70px" width="12.800000000000068" height="12.600000000000023" viewBox="0 0 12.6 12.6"><path d="M2.6 6.6 L5.2 9.2 L10.2 3.2" fill="none" stroke="#222" stroke-width="1.1"/></svg>
<span class="t" style="left:746.20px;top:149.80px;font-size:8px;color:#000;transform:scaleX(0.9037);">Time</span>
<div class="a" style="left:876.20px;top:147.30px;width:20.30px;height:11.60px;background:#e1e1e1;border:1px solid #b2b2b2;box-sizing:border-box;"></div>
<svg class="a" style="left:881.35px;top:148.10px" width="10" height="10" viewBox="0 0 16 16"><defs><linearGradient id="gg" x1="0" y1="0" x2="1" y2="1"><stop offset="0" stop-color="#eef2f5"/><stop offset="0.5" stop-color="#c6d0d8"/><stop offset="1" stop-color="#94a6b4"/></linearGradient></defs><g transform="translate(8,8)"><path d="M5.30 0.01 L7.28 0.60 L6.94 2.28 L4.89 2.05 L4.05 3.42 L5.19 5.14 L3.85 6.20 L2.42 4.71 L0.91 5.22 L0.67 7.27 L-1.04 7.23 L-1.17 5.17 L-2.66 4.58 L-4.16 6.00 L-5.44 4.87 L-4.22 3.20 L-4.98 1.80 L-7.04 1.92 L-7.30 0.23 L-5.29 -0.26 L-4.98 -1.82 L-6.63 -3.05 L-5.74 -4.51 L-3.89 -3.60 L-2.64 -4.60 L-3.12 -6.60 L-1.50 -7.15 L-0.66 -5.26 L0.93 -5.22 L1.86 -7.06 L3.45 -6.43 L2.87 -4.46 L4.07 -3.40 L5.96 -4.21 L6.78 -2.71 L5.06 -1.57Z" transform="translate(0.6,0.6)" fill="#8498a8" stroke="#8498a8" stroke-width="0.8" stroke-linejoin="round"/><path d="M5.30 0.01 L7.28 0.60 L6.94 2.28 L4.89 2.05 L4.05 3.42 L5.19 5.14 L3.85 6.20 L2.42 4.71 L0.91 5.22 L0.67 7.27 L-1.04 7.23 L-1.17 5.17 L-2.66 4.58 L-4.16 6.00 L-5.44 4.87 L-4.22 3.20 L-4.98 1.80 L-7.04 1.92 L-7.30 0.23 L-5.29 -0.26 L-4.98 -1.82 L-6.63 -3.05 L-5.74 -4.51 L-3.89 -3.60 L-2.64 -4.60 L-3.12 -6.60 L-1.50 -7.15 L-0.66 -5.26 L0.93 -5.22 L1.86 -7.06 L3.45 -6.43 L2.87 -4.46 L4.07 -3.40 L5.96 -4.21 L6.78 -2.71 L5.06 -1.57Z" fill="url(#gg)" stroke="#8ea0ae" stroke-width="0.7" stroke-linejoin="round"/><circle r="4.1" fill="none" stroke="#f4f7f9" stroke-width="0.7" opacity="0.7"/><circle cx="-0.2" cy="-0.1" r="2.8" fill="#465c6d"/><circle cx="0.7" cy="0.4" r="2.1" fill="#fdfdfe"/></g></svg>
<span class="t" style="left:731.60px;top:164.00px;font-size:8px;color:#000;transform:scaleX(0.8929);">Position:</span>
<div class="a" style="left:794.10px;top:160.50px;width:102.70px;height:14.30px;background:#fff;border:1px solid #898989;box-sizing:border-box;"></div>
<span class="t" style="left:796.50px;top:162.45px;font-size:11px;color:#2e2e2e;-webkit-text-stroke:0;transform:scaleX(0.9918);">50 ns</span>
<svg class="a" style="left:884.20px;top:165.65px" width="7.2" height="4.6" viewBox="0 0 7.2 4.6"><path d="M0.5 0.7 L3.6 3.8 L6.7 0.7" fill="none" stroke="#333" stroke-width="0.9"/></svg>
<span class="t" style="left:731.60px;top:179.20px;font-size:8px;color:#000;transform:scaleX(0.8501);">Base:</span>
<div class="a" style="left:794.10px;top:176.50px;width:102.70px;height:14.10px;background:#fff;border:1px solid #898989;box-sizing:border-box;"></div>
<span class="t" style="left:796.50px;top:178.35px;font-size:11px;color:#2e2e2e;-webkit-text-stroke:0;transform:scaleX(1.0697);">50 ns/div</span>
<svg class="a" style="left:884.20px;top:181.55px" width="7.2" height="4.6" viewBox="0 0 7.2 4.6"><path d="M0.5 0.7 L3.6 3.8 L6.7 0.7" fill="none" stroke="#333" stroke-width="0.9"/></svg>
<div class="a" style="left:728.80px;top:191.40px;width:168.20px;height:15.50px;background:#c3ddf4;"></div>
<svg class="a" style="left:811.00px;top:194.60px" width="5.4" height="10" viewBox="0 0 5.4 10"><path d="M1.9 0.3 H3.5 V5.6 H5.1 L2.7 9.7 L0.3 5.6 H1.9 Z" fill="#5cba34" stroke="#3d8f1e" stroke-width="0.35"/></svg>
<svg class="a" style="left:728.60px;top:213.60px" width="16.5" height="16.5" viewBox="0 0 16 16"><defs><linearGradient id="gg" x1="0" y1="0" x2="1" y2="1"><stop offset="0" stop-color="#eef2f5"/><stop offset="0.5" stop-color="#c6d0d8"/><stop offset="1" stop-color="#94a6b4"/></linearGradient></defs><g transform="translate(8,8)"><path d="M5.30 0.01 L7.28 0.60 L6.94 2.28 L4.89 2.05 L4.05 3.42 L5.19 5.14 L3.85 6.20 L2.42 4.71 L0.91 5.22 L0.67 7.27 L-1.04 7.23 L-1.17 5.17 L-2.66 4.58 L-4.16 6.00 L-5.44 4.87 L-4.22 3.20 L-4.98 1.80 L-7.04 1.92 L-7.30 0.23 L-5.29 -0.26 L-4.98 -1.82 L-6.63 -3.05 L-5.74 -4.51 L-3.89 -3.60 L-2.64 -4.60 L-3.12 -6.60 L-1.50 -7.15 L-0.66 -5.26 L0.93 -5.22 L1.86 -7.06 L3.45 -6.43 L2.87 -4.46 L4.07 -3.40 L5.96 -4.21 L6.78 -2.71 L5.06 -1.57Z" transform="translate(0.6,0.6)" fill="#8498a8" stroke="#8498a8" stroke-width="0.8" stroke-linejoin="round"/><path d="M5.30 0.01 L7.28 0.60 L6.94 2.28 L4.89 2.05 L4.05 3.42 L5.19 5.14 L3.85 6.20 L2.42 4.71 L0.91 5.22 L0.67 7.27 L-1.04 7.23 L-1.17 5.17 L-2.66 4.58 L-4.16 6.00 L-5.44 4.87 L-4.22 3.20 L-4.98 1.80 L-7.04 1.92 L-7.30 0.23 L-5.29 -0.26 L-4.98 -1.82 L-6.63 -3.05 L-5.74 -4.51 L-3.89 -3.60 L-2.64 -4.60 L-3.12 -6.60 L-1.50 -7.15 L-0.66 -5.26 L0.93 -5.22 L1.86 -7.06 L3.45 -6.43 L2.87 -4.46 L4.07 -3.40 L5.96 -4.21 L6.78 -2.71 L5.06 -1.57Z" fill="url(#gg)" stroke="#8ea0ae" stroke-width="0.7" stroke-linejoin="round"/><circle r="4.1" fill="none" stroke="#f4f7f9" stroke-width="0.7" opacity="0.7"/><circle cx="-0.2" cy="-0.1" r="2.8" fill="#465c6d"/><circle cx="0.7" cy="0.4" r="2.1" fill="#fdfdfe"/></g></svg>
<span class="t" style="left:748.00px;top:219.10px;font-size:8px;color:#000;transform:scaleX(0.9065);">Options</span>
<svg class="a" style="left:888.70px;top:221.40px" width="6.4" height="3.6" viewBox="0 0 6.4 3.6"><path d="M0.1 0.2 H6.3 L3.2 3.5 Z" fill="#000"/></svg>
<div class="a" style="left:726.90px;top:235.60px;width:172.10px;height:19.60px;background:#e1e1e1;border:1px solid #c4c4c4;box-sizing:border-box;"></div>
<svg class="a" style="left:729.00px;top:240.40px" width="10" height="10" viewBox="0 0 10 10"><defs><linearGradient id="pg" x1="0" y1="0" x2="0" y2="1"><stop offset="0" stop-color="#96e474"/><stop offset="0.5" stop-color="#48c424"/><stop offset="1" stop-color="#2f9e14"/></linearGradient></defs><path d="M4 0.5 h2 a0.5 0.5 0 0 1 0.5 0.5 v3 h3 a0.5 0.5 0 0 1 0.5 0.5 v1.6 a0.5 0.5 0 0 1 -0.5 0.5 h-3 v3 a0.5 0.5 0 0 1 -0.5 0.5 h-2 a0.5 0.5 0 0 1 -0.5 -0.5 v-3 h-3 a0.5 0.5 0 0 1 -0.5 -0.5 v-1.6 a0.5 0.5 0 0 1 0.5 -0.5 h3 v-3 a0.5 0.5 0 0 1 0.5 -0.5 z" fill="url(#pg)" stroke="#c4eeb2" stroke-width="0.4"/></svg>
<span class="t" style="left:742.00px;top:242.00px;font-size:8px;color:#000;transform:scaleX(0.8732);">Add Channel</span>
<svg class="a" style="left:888.70px;top:244.00px" width="6.4" height="3.6" viewBox="0 0 6.4 3.6"><path d="M0.1 0.2 H6.3 L3.2 3.5 Z" fill="#000"/></svg>
<div class="a" style="left:725.70px;top:257.00px;width:174.00px;height:48.70px;background:#f0f0f0;border:2px solid #d9ae12;box-sizing:border-box;"></div>
<div class="a" style="left:728.40px;top:260.30px;width:12.80px;height:11.60px;background:#fff;border:1px solid #3c3c3c;box-sizing:border-box;"></div>
<svg class="a" style="left:728.40px;top:260.30px" width="12.800000000000068" height="11.599999999999966" viewBox="0 0 12.6 12.6"><path d="M2.6 6.6 L5.2 9.2 L10.2 3.2" fill="none" stroke="#222" stroke-width="1.1"/></svg>
<span class="t" style="left:746.00px;top:262.80px;font-size:8px;color:#000;transform:scaleX(0.8881);">Channel 1</span>
<div class="a" style="left:876.20px;top:260.90px;width:20.30px;height:10.30px;background:#e1e1e1;border:1px solid #b2b2b2;box-sizing:border-box;"></div>
<svg class="a" style="left:881.35px;top:261.05px" width="10" height="10" viewBox="0 0 16 16"><defs><linearGradient id="gg" x1="0" y1="0" x2="1" y2="1"><stop offset="0" stop-color="#eef2f5"/><stop offset="0.5" stop-color="#c6d0d8"/><stop offset="1" stop-color="#94a6b4"/></linearGradient></defs><g transform="translate(8,8)"><path d="M5.30 0.01 L7.28 0.60 L6.94 2.28 L4.89 2.05 L4.05 3.42 L5.19 5.14 L3.85 6.20 L2.42 4.71 L0.91 5.22 L0.67 7.27 L-1.04 7.23 L-1.17 5.17 L-2.66 4.58 L-4.16 6.00 L-5.44 4.87 L-4.22 3.20 L-4.98 1.80 L-7.04 1.92 L-7.30 0.23 L-5.29 -0.26 L-4.98 -1.82 L-6.63 -3.05 L-5.74 -4.51 L-3.89 -3.60 L-2.64 -4.60 L-3.12 -6.60 L-1.50 -7.15 L-0.66 -5.26 L0.93 -5.22 L1.86 -7.06 L3.45 -6.43 L2.87 -4.46 L4.07 -3.40 L5.96 -4.21 L6.78 -2.71 L5.06 -1.57Z" transform="translate(0.6,0.6)" fill="#8498a8" stroke="#8498a8" stroke-width="0.8" stroke-linejoin="round"/><path d="M5.30 0.01 L7.28 0.60 L6.94 2.28 L4.89 2.05 L4.05 3.42 L5.19 5.14 L3.85 6.20 L2.42 4.71 L0.91 5.22 L0.67 7.27 L-1.04 7.23 L-1.17 5.17 L-2.66 4.58 L-4.16 6.00 L-5.44 4.87 L-4.22 3.20 L-4.98 1.80 L-7.04 1.92 L-7.30 0.23 L-5.29 -0.26 L-4.98 -1.82 L-6.63 -3.05 L-5.74 -4.51 L-3.89 -3.60 L-2.64 -4.60 L-3.12 -6.60 L-1.50 -7.15 L-0.66 -5.26 L0.93 -5.22 L1.86 -7.06 L3.45 -6.43 L2.87 -4.46 L4.07 -3.40 L5.96 -4.21 L6.78 -2.71 L5.06 -1.57Z" fill="url(#gg)" stroke="#8ea0ae" stroke-width="0.7" stroke-linejoin="round"/><circle r="4.1" fill="none" stroke="#f4f7f9" stroke-width="0.7" opacity="0.7"/><circle cx="-0.2" cy="-0.1" r="2.8" fill="#465c6d"/><circle cx="0.7" cy="0.4" r="2.1" fill="#fdfdfe"/></g></svg>
<span class="t" style="left:731.00px;top:276.60px;font-size:8px;color:#000;transform:scaleX(0.9393);">Offset:</span>
<div class="a" style="left:794.10px;top:273.20px;width:102.70px;height:14.20px;background:#fff;border:1px solid #898989;box-sizing:border-box;"></div>
<span class="t" style="left:796.50px;top:275.10px;font-size:11px;color:#2e2e2e;-webkit-text-stroke:0;transform:scaleX(1.0354);">0 V</span>
<svg class="a" style="left:884.20px;top:278.30px" width="7.2" height="4.6" viewBox="0 0 7.2 4.6"><path d="M0.5 0.7 L3.6 3.8 L6.7 0.7" fill="none" stroke="#333" stroke-width="0.9"/></svg>
<span class="t" style="left:731.40px;top:292.20px;font-size:8px;color:#000;transform:scaleX(0.8606);">Range:</span>
<div class="a" style="left:794.10px;top:289.00px;width:102.70px;height:14.10px;background:#fff;border:1px solid #898989;box-sizing:border-box;"></div>
<span class="t" style="left:796.50px;top:290.85px;font-size:11px;color:#2e2e2e;-webkit-text-stroke:0;transform:scaleX(1.0303);">200 mV/div</span>
<svg class="a" style="left:884.20px;top:294.05px" width="7.2" height="4.6" viewBox="0 0 7.2 4.6"><path d="M0.5 0.7 L3.6 3.8 L6.7 0.7" fill="none" stroke="#333" stroke-width="0.9"/></svg>
<div class="a" style="left:725.70px;top:307.10px;width:174.00px;height:18.00px;background:#f0f0f0;border:2px solid #1ea8dc;box-sizing:border-box;"></div>
<div class="a" style="left:728.40px;top:310.00px;width:12.80px;height:12.20px;background:#fff;border:1px solid #3c3c3c;box-sizing:border-box;"></div>
<span class="t" style="left:746.00px;top:312.80px;font-size:8px;color:#000;transform:scaleX(0.8990);">Channel 2</span>
<div class="a" style="left:876.20px;top:310.60px;width:20.30px;height:10.80px;background:#e1e1e1;border:1px solid #b2b2b2;box-sizing:border-box;"></div>
<svg class="a" style="left:881.35px;top:311.00px" width="10" height="10" viewBox="0 0 16 16"><defs><linearGradient id="gg" x1="0" y1="0" x2="1" y2="1"><stop offset="0" stop-color="#eef2f5"/><stop offset="0.5" stop-color="#c6d0d8"/><stop offset="1" stop-color="#94a6b4"/></linearGradient></defs><g transform="translate(8,8)"><path d="M5.30 0.01 L7.28 0.60 L6.94 2.28 L4.89 2.05 L4.05 3.42 L5.19 5.14 L3.85 6.20 L2.42 4.71 L0.91 5.22 L0.67 7.27 L-1.04 7.23 L-1.17 5.17 L-2.66 4.58 L-4.16 6.00 L-5.44 4.87 L-4.22 3.20 L-4.98 1.80 L-7.04 1.92 L-7.30 0.23 L-5.29 -0.26 L-4.98 -1.82 L-6.63 -3.05 L-5.74 -4.51 L-3.89 -3.60 L-2.64 -4.60 L-3.12 -6.60 L-1.50 -7.15 L-0.66 -5.26 L0.93 -5.22 L1.86 -7.06 L3.45 -6.43 L2.87 -4.46 L4.07 -3.40 L5.96 -4.21 L6.78 -2.71 L5.06 -1.57Z" transform="translate(0.6,0.6)" fill="#8498a8" stroke="#8498a8" stroke-width="0.8" stroke-linejoin="round"/><path d="M5.30 0.01 L7.28 0.60 L6.94 2.28 L4.89 2.05 L4.05 3.42 L5.19 5.14 L3.85 6.20 L2.42 4.71 L0.91 5.22 L0.67 7.27 L-1.04 7.23 L-1.17 5.17 L-2.66 4.58 L-4.16 6.00 L-5.44 4.87 L-4.22 3.20 L-4.98 1.80 L-7.04 1.92 L-7.30 0.23 L-5.29 -0.26 L-4.98 -1.82 L-6.63 -3.05 L-5.74 -4.51 L-3.89 -3.60 L-2.64 -4.60 L-3.12 -6.60 L-1.50 -7.15 L-0.66 -5.26 L0.93 -5.22 L1.86 -7.06 L3.45 -6.43 L2.87 -4.46 L4.07 -3.40 L5.96 -4.21 L6.78 -2.71 L5.06 -1.57Z" fill="url(#gg)" stroke="#8ea0ae" stroke-width="0.7" stroke-linejoin="round"/><circle r="4.1" fill="none" stroke="#f4f7f9" stroke-width="0.7" opacity="0.7"/><circle cx="-0.2" cy="-0.1" r="2.8" fill="#465c6d"/><circle cx="0.7" cy="0.4" r="2.1" fill="#fdfdfe"/></g></svg>
<div class="a" style="left:905.30px;top:143.00px;width:0.70px;height:439.80px;background:#f9f9f9;"></div>
<div class="a" style="left:0.00px;top:582.80px;width:910.00px;height:0.80px;background:#fafafa;"></div>
<div class="a" style="left:567.30px;top:588.40px;width:56.30px;height:9.40px;background:#e4e4e4;border:1px solid #b8b8b8;box-sizing:border-box;"></div>
<span class="t" style="left:571.00px;top:589.70px;font-size:8px;color:#000;transform:scaleX(0.9108);">Manual Trigger</span>
<div class="a" style="left:629.00px;top:588.40px;width:129.00px;height:9.40px;background:#e4e4e4;border:1px solid #b8b8b8;box-sizing:border-box;"></div>
<span class="t" style="left:633.00px;top:589.70px;font-size:8px;color:#000;transform:scaleX(0.8848);">ADP5250-323EF13 SN:323EF13 USB</span>
<div class="a" style="left:763.20px;top:588.40px;width:55.60px;height:9.40px;background:#e4e4e4;border:1px solid #b8b8b8;box-sizing:border-box;"></div>
<span class="t" style="left:774.60px;top:589.70px;font-size:8px;color:#000;transform:scaleX(0.8014);">WF3.18.1</span>
<svg class="a" style="left:765.40px;top:590.80px" width="8.6" height="4.6" viewBox="0 0 8.6 4.6"><path d="M2 0.5 H8.2 L6.4 4 H0.4 Z" fill="#f4f4f4" stroke="#8a8a8a" stroke-width="0.6"/></svg>
<div class="a" style="left:824.40px;top:588.40px;width:87.60px;height:9.40px;background:#e4e4e4;border:1px solid #b8b8b8;box-sizing:border-box;"></div>
<span class="t" style="left:849.20px;top:589.70px;font-size:8px;color:#000;transform:scaleX(0.9047);">Status: OK</span>
<svg class="a" style="left:901.70px;top:591.40px" width="6.4" height="3.6" viewBox="0 0 6.4 3.6"><path d="M0.1 0.2 H6.3 L3.2 3.5 Z" fill="#000"/></svg>
<div class="a" style="left:0.00px;top:599.60px;width:910.00px;height:3.40px;background:#ececec;"></div>
<div class="a" style="left:0.00px;top:599.40px;width:910.00px;height:0.60px;background:#cfcfcf;"></div>
<div class="a" style="left:561.80px;top:587.00px;width:0.70px;height:11.00px;background:#d0d0d0;"></div>
<div class="a" style="left:3.60px;top:600.00px;width:0.70px;height:3.00px;background:#c4c4c4;"></div>
<div class="a" style="left:46.30px;top:600.00px;width:0.70px;height:3.00px;background:#c4c4c4;"></div>
<div class="a" style="left:89.40px;top:600.00px;width:0.70px;height:3.00px;background:#c4c4c4;"></div>
<div class="a" style="left:131.60px;top:600.00px;width:0.70px;height:3.00px;background:#c4c4c4;"></div>
<div class="a" style="left:175.00px;top:600.00px;width:0.70px;height:3.00px;background:#c4c4c4;"></div>
<div class="a" style="left:748.20px;top:600.00px;width:0.70px;height:3.00px;background:#c4c4c4;"></div>
<div class="a" style="left:791.00px;top:600.00px;width:0.70px;height:3.00px;background:#c4c4c4;"></div>
<div class="a" style="left:833.80px;top:600.00px;width:0.70px;height:3.00px;background:#c4c4c4;"></div>
<div class="a" style="left:897.00px;top:599.00px;width:1.20px;height:4.00px;background:#777;"></div>
<div class="a" style="left:903.20px;top:599.00px;width:1.00px;height:4.00px;background:#999;"></div>
</div></body></html>
